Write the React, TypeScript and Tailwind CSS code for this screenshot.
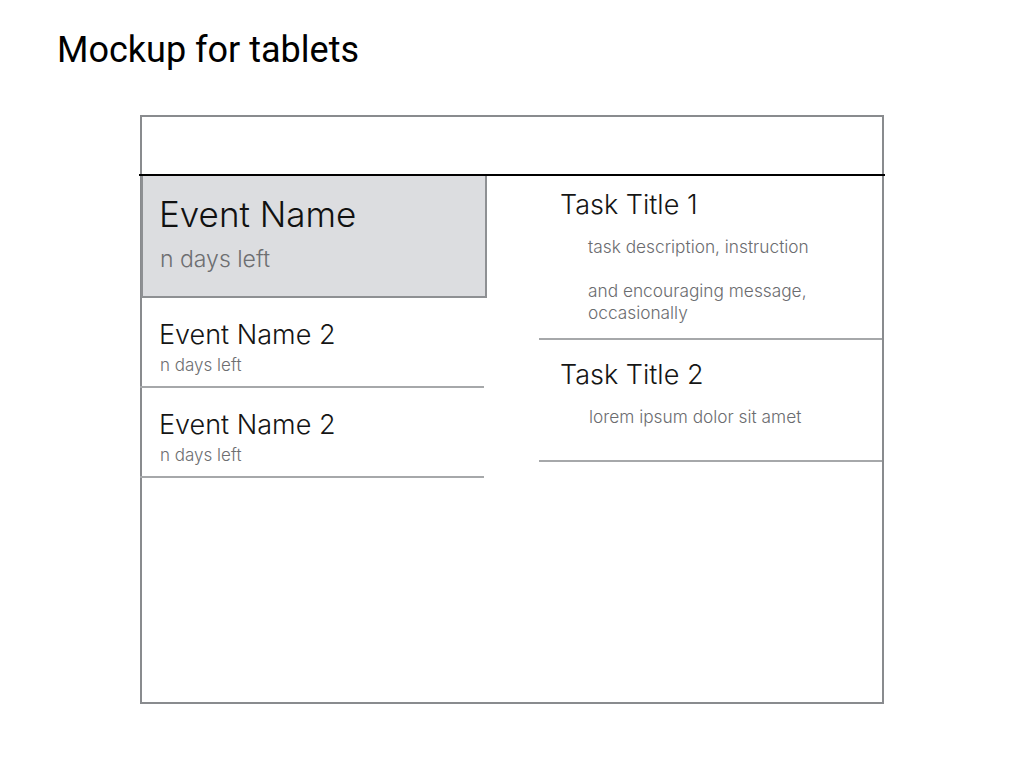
import React from "react";

const titleFont = { fontFamily: "Roboto, 'Liberation Sans', sans-serif" };
const bodyFont = { fontFamily: "Inter, 'Liberation Sans', sans-serif" };

function EventRow({ name }: { name: string }) {
  return (
    <div className="w-[344px] border-b-2 border-[#a6a8aa] pl-[19px] pt-[21px] pb-[11px]">
      <div className="text-[27px] leading-[32px] font-light text-[#151515]">{name}</div>
      <div className="mt-[4px] pl-[1px] text-[17px] leading-[20px] font-light text-[#6d6e71]">n days left</div>
    </div>
  );
}

export default function App() {
  return (
    <div className="w-[1024px] h-[768px] bg-white">
      <div className="pl-[57px] pt-[28px] text-[36px] leading-[44px] text-black" style={titleFont}>
        Mockup for tablets
      </div>
      <div
        className="ml-[140px] mt-[43px] w-[744px] h-[589px] border-2 border-[#898b8e] flex flex-col"
        style={bodyFont}
      >
        <div className="h-[57px]" />
        <div className="h-[2px] bg-black -mx-[3px]" />
        <div className="flex flex-1">
          <div className="flex flex-col -ml-px">
            <div className="w-[346px] h-[122px] bg-[#dcdde0] border-l-2 border-r-2 border-b-2 border-[#8e9093] pl-[16px] pt-[18px]">
              <div className="text-[35px] leading-[40px] font-light text-[#111]">Event Name</div>
              <div className="mt-[11px] pl-[1px] text-[23px] leading-[28px] font-light text-[#6d6e71]">n days left</div>
            </div>
            <div className="-ml-px">
              <EventRow name="Event Name 2" />
              <EventRow name="Event Name 2" />
            </div>
          </div>
          <div className="ml-[52px] flex-1 flex flex-col">
            <div className="h-[164px] border-b-2 border-[#a6a8aa] pl-[21px] pt-[13px]">
              <div className="text-[27px] leading-[32px] font-light text-[#151515]">Task Title 1</div>
              <div className="mt-[15px] pl-[28px] text-[17.3px] leading-[22px] font-light text-[#6b6c6f]">
                task description, instruction
                <br />
                <br />
                and encouraging message,
                <br />
                occasionally
              </div>
            </div>
            <div className="h-[122px] border-b-2 border-[#a6a8aa] pl-[21px] pt-[19px]">
              <div className="text-[27px] leading-[32px] font-light text-[#151515]">Task Title 2</div>
              <div className="mt-[15px] pl-[29px] text-[17.3px] leading-[22px] font-light text-[#6b6c6f]">
                lorem ipsum dolor sit amet
              </div>
            </div>
          </div>
        </div>
      </div>
    </div>
  );
}
